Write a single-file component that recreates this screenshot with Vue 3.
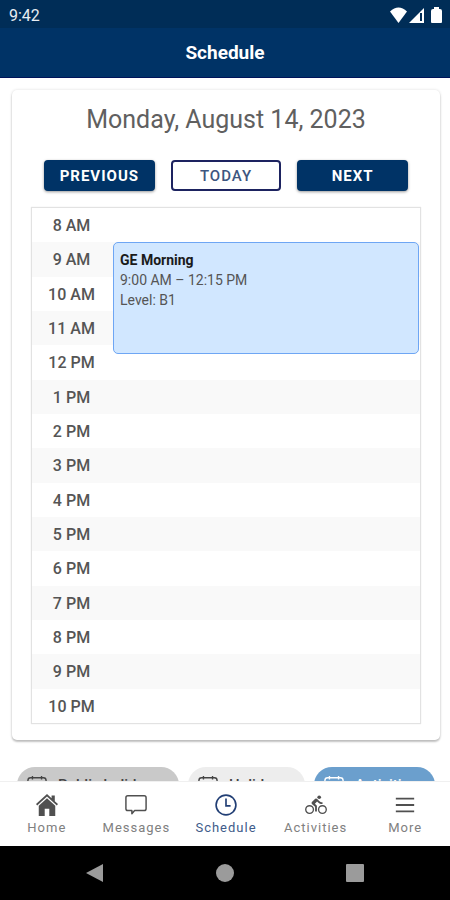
<template>
  <div class="phone">
    <div class="status-bar">
      <span>9:42</span>
      <div class="status-icons">
        <svg class="wifi" viewBox="0 0 17 16"><path d="M0 4.500 Q8.500 -3.500 17 4.500 L8.500 16 Z" fill="#fff" /></svg>
        <svg class="signal" viewBox="0 0 15 16">
          <path d="M15 1V16H0Z" fill="#fff" />
          <path d="M11 6h2v8h-2z" fill="#002d57" />
        </svg>
        <svg class="battery" viewBox="0 0 11 16"><path d="M3 0h5v2h1a2 2 0 0 1 2 2v11a1 1 0 0 1-1 1H1a1 1 0 0 1-1-1V4a2 2 0 0 1 2-2h1z" fill="#fff" /></svg>
      </div>
    </div>
    <header class="title-bar">
      <h1>Schedule</h1>
    </header>

    <main class="content">
      <section class="card">
        <h2>{{ formattedDate }}</h2>
        <div class="btn-box">
          <button class="day-btn" @click="moveDay(-1)">PREVIOUS</button>
          <button class="day-btn outline" @click="goToday">TODAY</button>
          <button class="day-btn" @click="moveDay(1)">NEXT</button>
        </div>
        <div class="timetable">
          <div v-for="hour in hours" :key="hour" class="hour-row">
            <span class="hour">{{ hourLabel(hour) }}</span>
          </div>
          <div class="lessons">
            <article v-for="lesson in lessons" :key="lesson.name" class="lesson" :style="lessonStyle(lesson)">
              <strong>{{ lesson.name }}</strong>
              <p>{{ lesson.time }}</p>
              <p>{{ lesson.level }}</p>
            </article>
          </div>
        </div>
      </section>

      <div class="filters">
        <button v-for="filter in filters" :key="filter.name" class="chip" :class="filter.type">
          <svg viewBox="0 0 22 22" fill="none" stroke="currentColor" stroke-width="1.500">
            <rect x="1" y="3" width="20" height="18" rx="3" />
            <path d="M6 1v4M16 1v4M1 8h20" />
          </svg>
          {{ filter.name }}
        </button>
      </div>
    </main>

    <nav class="tab-bar">
      <a v-for="tab in tabs" :key="tab.name" href="#" class="tab" :class="{ active: tab.name === current }" @click.prevent="current = tab.name">
        <svg v-if="tab.name === 'Home'" viewBox="0 0 24 24">
          <path d="M12 0 0 11l1.300 1.500L12 2.800l10.700 9.700L24 11l-3.500-3.200V1.500h-3.500v3.100z" fill="currentColor" />
          <path d="M12 4.500 3 12.700V24h6.500v-8h5v8H21V12.700z" fill="currentColor" />
        </svg>
        <svg v-else-if="tab.name === 'Messages'" viewBox="0 0 24 24" fill="none" stroke="currentColor" stroke-width="1.600">
          <path d="M3 2h18a2 2 0 0 1 2 2v12a2 2 0 0 1-2 2H10.500L7.500 21.500V18H3a2 2 0 0 1-2-2V4a2 2 0 0 1 2-2z" stroke-linejoin="round" />
        </svg>
        <svg v-else-if="tab.name === 'Schedule'" viewBox="0 0 24 24" fill="none" stroke="currentColor" stroke-width="1.800">
          <circle cx="12" cy="12" r="10.800" />
          <path d="M12 5v8h5" />
        </svg>
        <svg v-else-if="tab.name === 'Activities'" viewBox="0 0 24 24" fill="currentColor">
          <circle cx="15.500" cy="3.500" r="2" />
          <path d="M10.800 10.500l2.400-2.400.8.800c1.300 1.300 3 2.100 5.100 2.100V9c-1.500 0-2.700-.6-3.600-1.500l-1.900-1.900c-.5-.4-1-.6-1.600-.6s-1.100.2-1.400.6L7.800 8.400c-.4.4-.6.9-.6 1.400 0 .6.2 1.100.6 1.400L11 14v5h2v-6.200z" />
          <circle cx="5" cy="17" r="4.200" fill="none" stroke="currentColor" stroke-width="1.500" />
          <circle cx="19" cy="17" r="4.200" fill="none" stroke="currentColor" stroke-width="1.500" />
        </svg>
        <svg v-else viewBox="0 0 24 24" fill="none" stroke="currentColor" stroke-width="2">
          <path d="M2 5h20M2 12h20M2 19h20" />
        </svg>
        <span>{{ tab.name }}</span>
      </a>
    </nav>

    <div class="system-bar">
      <button aria-label="Back"><svg viewBox="0 0 20 20"><path d="M18 1v18L1 10z" /></svg></button>
      <button aria-label="Home screen"><svg viewBox="0 0 20 20"><circle cx="10" cy="10" r="9" /></svg></button>
      <button aria-label="Recent apps"><svg viewBox="0 0 20 20"><rect x="1" y="1" width="18" height="18" rx="1" /></svg></button>
    </div>
  </div>
</template>

<script setup>
import { ref, computed } from "vue";

const startDate = new Date(2023, 7, 14);
const selectedDate = ref(startDate);
const current = ref("Schedule");

const formattedDate = computed(() =>
  selectedDate.value.toLocaleDateString("en-US", {
    weekday: "long",
    month: "long",
    day: "numeric",
    year: "numeric",
  })
);

// 8 AM to 10 PM
const firstHour = 8;
const hours = Array.from({ length: 15 }, (_, i) => firstHour + i);

const lessons = [
  { name: "GE Morning", time: "9:00 AM – 12:15 PM", level: "Level: B1", start: 9, end: 12.25 },
];

const filters = [
  { name: "Public holiday", type: "public" },
  { name: "Holiday", type: "holiday" },
  { name: "Activities", type: "activities" },
];

const tabs = [
  { name: "Home" },
  { name: "Messages" },
  { name: "Schedule" },
  { name: "Activities" },
  { name: "More" },
];

function hourLabel(hour) {
  return `${hour > 12 ? hour - 12 : hour} ${hour < 12 ? "AM" : "PM"}`;
}

// position of a lesson inside the day
function lessonStyle(lesson) {
  return {
    top: `${((lesson.start - firstHour) / hours.length) * 100}%`,
    height: `${((lesson.end - lesson.start) / hours.length) * 100}%`,
  };
}

function moveDay(step) {
  const date = new Date(selectedDate.value);
  date.setDate(date.getDate() + step);
  selectedDate.value = date;
}

function goToday() {
  selectedDate.value = startDate;
}
</script>

<style>
body {
  margin: 0;
  background: #fff;
}
</style>

<style scoped>
.phone {
  height: 100vh;
  display: flex;
  flex-direction: column;
  font-family: Roboto, "Liberation Sans", sans-serif;
  color: #555;
}

.phone * {
  box-sizing: border-box;
}

h1,
h2,
p {
  margin: 0;
}

button {
  font-family: inherit;
  cursor: pointer;
}

.status-bar {
  height: 28px;
  padding: 2px 8px 0 9px;
  display: flex;
  align-items: center;
  justify-content: space-between;
  background: #002d57;
  color: #e8edf2;
  font-size: 16px;
}

.status-icons {
  display: flex;
  align-items: center;
  gap: 2px;
}

.status-icons svg {
  height: 16px;
}

.wifi {
  width: 17px;
}

.signal {
  width: 15px;
}

.battery {
  width: 11px;
  margin-left: 5px;
}

.title-bar {
  height: 50px;
  display: flex;
  align-items: center;
  justify-content: center;
  background: #003366;
  border-bottom: 1px solid #00145a;
  color: #fff;
}

h1 {
  font-size: 19px;
  font-weight: 700;
}

.content {
  flex: 1;
  min-height: 0;
  overflow: hidden;
  padding: 12px 10px 0 12px;
}

.card {
  padding: 13px 19px 16px;
  border-radius: 5px;
  background: #fff;
  box-shadow: 0 2px 2px rgba(0, 0, 0, 0.22), 0 0 3px rgba(0, 0, 0, 0.14);
}

h2 {
  color: #606060;
  font-size: 25px;
  line-height: 34px;
  font-weight: 400;
  text-align: center;
}

.btn-box {
  display: flex;
  gap: 16px;
  padding: 23px 13px 16px;
}

.day-btn {
  flex: 1;
  height: 31px;
  padding: 0;
  border: 2px solid #003366;
  border-radius: 4px;
  background: #003366;
  color: #fff;
  font-size: 15px;
  font-weight: 700;
  letter-spacing: 1px;
  box-shadow: 0 1px 3px rgba(0, 0, 0, 0.4);
}

.day-btn.outline {
  background: #fff;
  border-color: #1d2360;
  color: #3d5680;
  font-weight: 500;
  box-shadow: none;
}

.timetable {
  position: relative;
  min-height: 517px;
  display: grid;
  grid-auto-rows: 1fr;
  border: 1px solid #e2e2e2;
  box-shadow: 0 0 1px #e2e2e2;
}

.hour-row {
  display: flex;
  align-items: center;
}

.hour-row:nth-child(even) {
  background: #f9f9f9;
}

.hour {
  width: 79px;
  padding-top: 1px;
  text-align: center;
  font-size: 16px;
  font-weight: 500;
}

.lessons {
  position: absolute;
  top: 0;
  right: 1px;
  bottom: 0;
  left: 81px;
}

.lesson {
  position: absolute;
  left: 0;
  right: 0;
  padding: 7px 6px;
  border: 1px solid #6ea6f4;
  border-radius: 5px;
  background: #d1e7ff;
  font-size: 14px;
  line-height: 20px;
}

.lesson strong {
  display: block;
  color: #1a1a1a;
  font-weight: 700;
}

.filters {
  display: grid;
  grid-template-columns: 162fr 117fr 121fr;
  gap: 9px;
  padding: 27px 5px 0;
}

.chip {
  height: 36px;
  display: flex;
  align-items: center;
  gap: 11px;
  padding: 0 0 0 10px;
  border: none;
  border-radius: 18px;
  color: #444;
  font-size: 15px;
  font-weight: 500;
  white-space: nowrap;
}

.chip svg {
  flex: none;
  width: 20px;
  height: 20px;
}

.public {
  background: #c9c9c9;
}

.holiday {
  background: #ededed;
}

.activities {
  background: #6b9fcd;
  color: #fff;
}

.tab-bar {
  height: 65px;
  display: flex;
  padding-left: 2px;
  border-top: 1px solid #f0f0f0;
  background: #fff;
}

.tab {
  flex: 1;
  display: flex;
  flex-direction: column;
  align-items: center;
  gap: 3px;
  padding-top: 12px;
  color: #505050;
  font-size: 13px;
  line-height: 18px;
  letter-spacing: 1px;
  text-decoration: none;
}

.tab span {
  color: #808080;
}

.tab svg {
  width: 22px;
  height: 22px;
}

.tab.active,
.tab.active span {
  color: #405b8a;
}

.tab.active svg {
  color: #223f75;
}

.system-bar {
  height: 54px;
  display: flex;
  align-items: center;
  justify-content: center;
  gap: 110px;
  background: #000;
}

.system-bar button {
  display: flex;
  padding: 0;
  border: none;
  background: none;
}

.system-bar svg {
  width: 20px;
  height: 20px;
  fill: #9b9b9b;
}
</style>
